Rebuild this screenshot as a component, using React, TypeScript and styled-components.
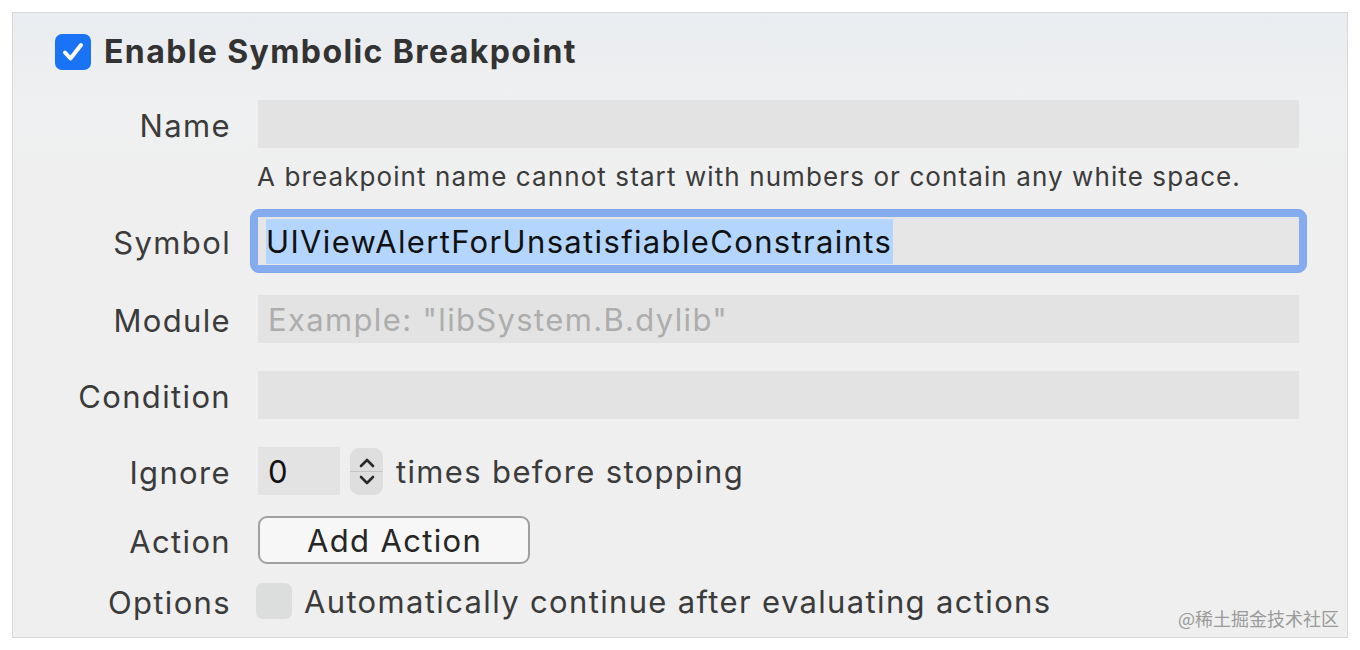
import styled, { createGlobalStyle } from 'styled-components';

const GlobalStyle = createGlobalStyle`
  html, body {
    margin: 0;
    padding: 0;
    background: #ffffff;
  }
  body {
    font-family: Inter, "Noto Sans", "Liberation Sans", sans-serif;
  }
`;

const Panel = styled.div`
  position: relative;
  box-sizing: border-box;
  margin: 12px 12px 0 12px;
  height: 626px;
  border: 1px solid #d9d9d9;
  background: linear-gradient(180deg, #e9ecf0 0px, #eff0f1 90px, #efefef 200px);
  padding: 21px 48px 0 0;
`;

const Title = styled.div`
  display: flex;
  align-items: center;
  gap: 13px;
  padding-left: 42px;
  font-size: 32px;
  font-weight: 700;
  color: #333333;
  letter-spacing: 1.4px;
  line-height: 36px;
`;

const CheckBox = styled.div<{ $on?: boolean }>`
  box-sizing: border-box;
  width: 36px;
  height: 36px;
  border-radius: 7px;
  display: flex;
  align-items: center;
  justify-content: center;
  flex-shrink: 0;
  background: ${(p) => (p.$on ? '#1a73f5' : '#dcdddd')};
`;

const Row = styled.div<{ $top: number; $h?: number }>`
  display: grid;
  grid-template-columns: 217px 1fr;
  column-gap: 28px;
  align-items: center;
  margin-top: ${(p) => p.$top}px;
  min-height: ${(p) => p.$h ?? 48}px;
`;

const Label = styled.div`
  text-align: right;
  font-size: 31px;
  color: #3b3b3b;
  letter-spacing: 1.35px;
  padding-top: 3px;
  margin-right: -1px;
`;

const Field = styled.div<{ $w?: number; $focus?: boolean }>`
  box-sizing: border-box;
  height: 48px;
  width: ${(p) => (p.$w ? `${p.$w}px` : '100%')};
  background: ${(p) => (p.$focus ? '#e6e6e6' : '#e3e3e3')};
  display: flex;
  align-items: center;
  padding-left: 10px;
  font-size: 31px;
  letter-spacing: 1.35px;
  color: #111111;
`;

const FocusRing = styled.div`
  box-sizing: border-box;
  margin: -8px;
  padding: 7px;
  border: 1px solid #7ea6ec;
  border-radius: 9px;
  background: #86acf0;
`;

const Selected = styled.span`
  background: #b4d6fe;
  color: #111111;
  padding: 4px 1px 4px 0;
  margin-left: -2px;
`;

const Placeholder = styled.span`
  color: #adadad;
`;

const Hint = styled.div`
  grid-column: 2;
  font-size: 26px;
  color: #3b3b3b;
  margin-left: -1px;
  letter-spacing: 1.1px;
`;

const Inline = styled.div`
  display: flex;
  align-items: center;
`;

const Stepper = styled.div`
  box-sizing: border-box;
  width: 33px;
  height: 47px;
  margin-left: 10px;
  border-radius: 9px;
  background: #dedede;
  display: flex;
  flex-direction: column;
  align-items: center;
  justify-content: center;
`;

const StepDivider = styled.div`
  width: 100%;
  height: 1px;
  background: #c4c4c4;
  margin: 2px 0;
`;

const Text = styled.span<{ $ml?: number }>`
  font-size: 31px;
  color: #3b3b3b;
  margin-left: ${(p) => p.$ml ?? 0}px;
  letter-spacing: 1.35px;
`;

const Button = styled.div`
  box-sizing: border-box;
  width: 272px;
  height: 48px;
  border: 2px solid #a0a0a0;
  border-radius: 9px;
  background: #f7f7f7;
  font-size: 31px;
  color: #262626;
  display: flex;
  align-items: center;
  padding-left: 47px;
  letter-spacing: 1.35px;
`;

const Watermark = styled.div`
  position: absolute;
  right: 8px;
  bottom: 6px;
  font-family: "Noto Sans CJK SC", sans-serif;
  font-size: 18px;
  color: #9a9a9a;
`;

function Check() {
  return (
    <svg width="26" height="26" viewBox="0 0 26 26">
      <path d="M5 13.5 L10.5 19.5 L21 6" fill="none" stroke="#fff" strokeWidth="4" strokeLinecap="round" strokeLinejoin="round" />
    </svg>
  );
}

function Chevron({ up }: { up?: boolean }) {
  return (
    <svg width="18" height="12" viewBox="0 0 18 12">
      <path
        d={up ? 'M3 9 L9 3 L15 9' : 'M3 3 L9 9 L15 3'}
        fill="none"
        stroke="#2a2a2a"
        strokeWidth="2.6"
        strokeLinecap="round"
        strokeLinejoin="round"
      />
    </svg>
  );
}

export default function App() {
  return (
    <>
      <GlobalStyle />
      <Panel>
        <Title>
          <CheckBox $on>
            <Check />
          </CheckBox>
          Enable Symbolic Breakpoint
        </Title>

        <Row $top={30}>
          <Label>Name</Label>
          <Field />
        </Row>
        <Row $top={10} $h={36}>
          <Hint>A breakpoint name cannot start with numbers or contain any white space.</Hint>
        </Row>

        <Row $top={23}>
          <Label>Symbol</Label>
          <FocusRing>
            <Field $focus>
              <Selected>UIViewAlertForUnsatisfiableConstraints</Selected>
            </Field>
          </FocusRing>
        </Row>

        <Row $top={30}>
          <Label>Module</Label>
          <Field>
            <Placeholder>Example: "libSystem.B.dylib"</Placeholder>
          </Field>
        </Row>

        <Row $top={28}>
          <Label>Condition</Label>
          <Field />
        </Row>

        <Row $top={28}>
          <Label>Ignore</Label>
          <Inline>
            <Field $w={82}>0</Field>
            <Stepper>
              <Chevron up />
              <StepDivider />
              <Chevron />
            </Stepper>
            <Text $ml={13}>times before stopping</Text>
          </Inline>
        </Row>

        <Row $top={21}>
          <Label>Action</Label>
          <Inline>
            <Button>Add Action</Button>
          </Inline>
        </Row>

        <Row $top={17} $h={38}>
          <Label>Options</Label>
          <Inline>
            <CheckBox style={{ marginLeft: -2 }} />
            <Text $ml={12}>Automatically continue after evaluating actions</Text>
          </Inline>
        </Row>

        <Watermark>@稀土掘金技术社区</Watermark>
      </Panel>
    </>
  );
}
